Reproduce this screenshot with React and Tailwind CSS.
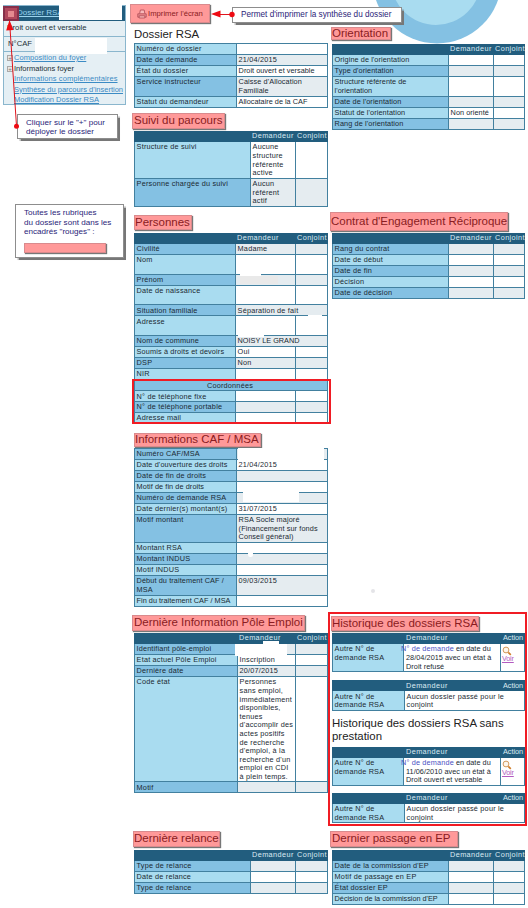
import React from "react";

const ALT = { label: "bg-[#84c1e3]", value: "bg-[#e5ecf0]" };
const BASE = { label: "bg-[#a9dcf0]", value: "bg-white" };
const LINE = "border-[#42809f]";

const COLS = {
  two: ["w-[102px]", "flex-1"],
  wide: ["w-[116px]", "w-[45px]", "flex-1"],
  person: ["w-[101px]", "w-[60px]", "flex-1"],
  job: ["w-[103px]", "w-[58px]", "flex-1"],
  history: ["w-[72px]", "w-[97px]", "flex-1"],
  pair: ["w-[72px]", "flex-1"],
};

// Letter spacing for the labels that are set tighter than the table default
const TRACKING = {
  "Fin du traitement CAF / MSA": "tracking-[0.02px]",
  "Début du traitement CAF /\nMSA": "tracking-[0.1px]",
  "Date d'ouverture des droits": "tracking-[0.13px]",
  "Soumis à droits et devoirs": "tracking-[0.14px]",
  "Non orienté": "tracking-[0.05px]",
  "Droit ouvert et versable": "tracking-[0.02px]",
  "Caisse d'Allocation\nFamiliale": "tracking-[0.1px]",
  "Allocataire de la CAF": "tracking-[0.01px]",
  "Motif de fin de droits": "tracking-[0.08px]",
  "Identifiant pôle-emploi": "tracking-[0.14px]",
  "Structure référente de\nl'orientation": "tracking-[0.04px]",
  "Origine de l'orientation": "tracking-[0.08px]",
  "Type d'orientation": "tracking-[0.1px]",
  "Date de l'orientation": "tracking-[0.1px]",
  "Statut de l'orientation": "tracking-[0.1px]",
  "Rang de l'orientation": "tracking-[0.1px]",
  "RSA Socle majoré\n(Financement sur fonds\nConseil général)": "tracking-[0.11px]",
  "Date de la commission d'EP": "tracking-[0.12px]",
  "Décision de la commission d'EP": "tracking-[-0.02px]",
  "NOISY LE GRAND": "tracking-[0px]",
};

// Values that run over into the next column, with no divider after them
const OPEN = ["Séparation de fait", "NOISY LE GRAND"];

function Head({ cols, labels }) {
  return (
    <div className="flex h-[11px] bg-[#225d7e] text-[#dcebf3]">
      {cols.map((w, i) => (
        <div
          key={i}
          className={`${w} shrink-0 whitespace-nowrap pl-[2px] pt-[1.4px] ${labels[i] === "Action" ? "tracking-[-0.05px]" : "tracking-[0.4px]"}`}
        >
          {labels[i]}
        </div>
      ))}
    </div>
  );
}

function Row({ cols, cells, alt }) {
  const tone = alt ? ALT : BASE;
  return (
    <div className={`flex border-b border-l ${LINE}`}>
      {cols.map((w, i) => (
        <div
          key={i}
          className={`${w} shrink-0 whitespace-pre pl-[1.6px] pt-[1.4px] ${OPEN.includes(cells[i]) ? "" : "border-r"} ${LINE} ${i === 0 ? tone.label : tone.value}`}
        >
          <span className={`relative z-10 ${TRACKING[cells[i]] || ""}`}>{cells[i] || " "}</span>
        </div>
      ))}
    </div>
  );
}

function Table({ kind, head, rows, firstAlt = false, className = "" }) {
  const cols = COLS[kind];
  return (
    <div className={`w-[194px] text-[7.3px] leading-[8.6px] tracking-[0.2px] text-[#1b2a33] ${className}`}>
      {head ? <Head cols={cols} labels={head} /> : <div className={`-mt-px border-t ${LINE}`} />}
      {rows.map((r, i) => {
        const alt = firstAlt ? i % 2 === 0 : i % 2 === 1;
        if (typeof r === "string") {
          return (
            <div key={i} className={`border-x border-b bg-[#84c1e3] pr-[2px] pt-[1.9px] text-center ${LINE}`}>
              {r}
            </div>
          );
        }
        return <Row key={i} cols={cols} cells={r} alt={alt} />;
      })}
    </div>
  );
}

const BOX = "border border-[#d98a8d] bg-[#ff9999] shadow-[1px_1px_1px_#777]";

function Title({ className, children }) {
  return (
    <h2 className={`flex items-center whitespace-nowrap text-[11.5px] leading-none tracking-[-0.02px] text-[#8a1c22] ${BOX} ${className}`}>
      {children}
    </h2>
  );
}

const CALLOUT = "absolute border border-[#8d8d8d] bg-white text-[#2b2478] shadow-[1.5px_1.5px_1px_#777]";

function Magnifier() {
  return (
    <svg viewBox="0 0 10 10" className="h-[10px] w-[10px]">
      <circle cx="4" cy="4" r="2.9" fill="#fdf6ec" stroke="#d39a5c" strokeWidth="1" />
      <path d="M6.3 6.3L8.8 8.8" stroke="#d07d28" strokeWidth="1.7" />
    </svg>
  );
}

function HistoryTable({ lines, className }) {
  return (
    <div className={`w-[193px] text-[7.3px] leading-[8.6px] tracking-[0.2px] text-[#1b2a33] ${className}`}>
      <Head cols={COLS.history} labels={["", "Demandeur", "Action"]} />
      <div className={`flex border-b border-l ${LINE}`}>
        <div className={`w-[71px] shrink-0 whitespace-pre border-r bg-[#a9dcf0] pl-[1.6px] pt-[1.4px] ${LINE}`}>
          {"Autre N° de\ndemande RSA"}
        </div>
        <div className={`w-[97px] shrink-0 whitespace-pre border-r bg-white pl-[2px] pt-[1.4px] tracking-[0.04px] ${LINE}`}>
          <div className="-ml-[5px] flex gap-[2px]">
            <span className="relative tracking-[0.16px] text-[#4a52c4]">N° de demande</span>
            <span>en date du</span>
          </div>
          <div>{lines}</div>
        </div>
        <div className={`flex-1 border-r bg-white pl-[1px] pt-[2px] ${LINE}`}>
          <Magnifier />
          <div className="-mt-px leading-[8px] tracking-[-0.2px] text-[#b35bc0] underline">Voir</div>
        </div>
      </div>
    </div>
  );
}

function EmptyHistory({ className }) {
  return (
    <div className={`w-[193px] text-[7.3px] leading-[8.6px] tracking-[0.2px] text-[#1b2a33] ${className}`}>
      <Head cols={COLS.history} labels={["", "Demandeur", "Action"]} />
      <Row cols={COLS.pair} cells={["Autre N° de\ndemande RSA", "Aucun dossier passé pour le\nconjoint"]} />
    </div>
  );
}

function Expand() {
  return (
    <span className="flex h-[6px] w-[6px] shrink-0 items-center justify-center border border-[#a9a9a9] bg-[#e9e6e3] text-[6px] leading-none text-[#777]">
      +
    </span>
  );
}

function Sidebar() {
  const link = "whitespace-nowrap pl-[10px] text-[#3b8bc4] underline";
  return (
    <div className="ml-[3px] mt-[5px] h-[100px] w-[123px] border border-[#8ab6cd] bg-[#e5eff4] text-[7.5px] leading-[10.5px] text-[#222f36]">
      <div className="flex h-[15px] items-center bg-[#225d7e] pl-[13px] text-[8px] text-[#9bd4ee]">
        <span className="underline">Dossier RSA</span>
      </div>
      <div className="flex h-[16px] items-center border-b border-[#8ab6cd] pl-[3px] text-[7.7px]">Droit ouvert et versable</div>
      <div className="flex h-[15px] items-center border-b border-[#8ab6cd] pl-[4px] text-[7.7px]">N°CAF</div>
      <div className="flex items-center gap-[1px] whitespace-nowrap pl-[3px] pt-[1px]">
        <Expand />
        <span className="tracking-[0.07px] text-[#3b8bc4] underline">Composition du foyer</span>
      </div>
      <div className="flex items-center gap-[1px] whitespace-nowrap pl-[3px]">
        <Expand />
        <span>Informations foyer</span>
      </div>
      <div className={`${link} tracking-[0.11px]`}>Informations complémentaires</div>
      <div className={link}>Synthèse du parcours d'insertion</div>
      <div className={link}>Modification Dossier RSA</div>
    </div>
  );
}

const DC = ["", "Demandeur", "Conjoint"];

export default function App() {
  return (
    <div className="relative h-[908px] w-[528px] overflow-hidden bg-white font-['Liberation_Sans',Arial,sans-serif]">
      <svg className="absolute left-0 top-0 h-[50px] w-[528px]" viewBox="0 0 528 50">
        <circle cx="437" cy="-21" r="64.5" fill="#84c1e3" />
        <circle cx="436" cy="-20" r="45" fill="#a9dcf0" />
      </svg>

      <div className="relative flex">
        <aside className="w-[134px] shrink-0">
          <Sidebar />
        </aside>

        <main className="w-[198px] shrink-0">
          <section className="h-[111px]">
            <div className="h-[25px] pt-[4px]">
              <div className={`-ml-[4px] flex h-[19px] w-[80px] items-center gap-[1px] pl-[6px] ${BOX}`}>
                <svg viewBox="0 0 10 10" className="h-[10px] w-[10px]" fill="none" stroke="#b5545c" strokeWidth="0.9">
                  <path d="M2.6 4.6L3.4 1h3.800l.6 3.600" fill="#f7b9ba" />
                  <path d="M.8 4.8h8.400v3.400H.8z" fill="#e98a8e" />
                  <path d="M2.2 6.8h5.600v2.200H2.2z" fill="#f7b9ba" />
                </svg>
                <span className="whitespace-nowrap text-[7.7px] leading-none text-[#8a1c22]">Imprimer l'écran</span>
              </div>
            </div>
            <h2 className="flex h-[19px] items-center text-[11.4px] leading-none text-[#222]">Dossier RSA</h2>
            <Table
              kind="two"
              rows={[
                ["Numéro de dossier"],
                ["Date de demande", "21/04/2015"],
                ["État du dossier", "Droit ouvert et versable"],
                ["Service instructeur", "Caisse d'Allocation\nFamiliale"],
                ["Statut du demandeur", "Allocataire de la CAF"],
              ]}
            />
          </section>

          <section className="h-[102px]">
            <div className="h-[20px] pt-[2px]">
              <Title className="-ml-[2px] h-[16px] w-[93px] pl-[1px]">Suivi du parcours</Title>
            </div>
            <Table
              kind="wide"
              head={DC}
              rows={[
                ["Structure de suivi", "Aucune\nstructure\nréférente\nactive"],
                ["Personne chargée du suivi", "Aucun\nréférent\nactif"],
              ]}
            />
          </section>

          <section className="h-[218px]">
            <div className="h-[20px] pt-[2px]">
              <Title className="h-[15px] w-[58px]">Personnes</Title>
            </div>
            <Table
              kind="person"
              head={DC}
              firstAlt
              rows={[
                ["Civilité", "Madame"],
                ["Nom\n "],
                ["Prénom"],
                ["Date de naissance\n "],
                ["Situation familiale", "Séparation de fait"],
                ["Adresse\n "],
                ["Nom de commune", "NOISY LE GRAND"],
                ["Soumis à droits et devoirs", "Oui"],
                ["DSP", "Non"],
                ["NIR"],
                "Coordonnées",
                ["N° de téléphone fixe"],
                ["N° de téléphone portable"],
                ["Adresse mail"],
              ]}
            />
          </section>

          <section className="h-[181px]">
            <div className="h-[18px] pt-[2px]">
              <Title className="h-[14px] w-[127px]">Informations CAF / MSA</Title>
            </div>
            <Table
              kind="two"
              firstAlt
              rows={[
                ["Numéro CAF/MSA"],
                ["Date d'ouverture des droits", "21/04/2015"],
                ["Date de fin de droits"],
                ["Motif de fin de droits"],
                ["Numéro de demande RSA"],
                ["Date dernier(s) montant(s)", "31/07/2015"],
                ["Motif montant", "RSA Socle majoré\n(Financement sur fonds\nConseil général)"],
                ["Montant RSA"],
                ["Montant INDUS"],
                ["Motif INDUS"],
                ["Début du traitement CAF /\nMSA", "09/03/2015"],
                ["Fin du traitement CAF / MSA"],
              ]}
            />
          </section>

          <section className="h-[218px]">
            <div className="h-[21px] pt-[3px]">
              <Title className="-ml-[2px] h-[16px] w-[173px] pl-[1px]">Dernière Information Pôle Emploi</Title>
            </div>
            <Table
              kind="job"
              head={DC}
              firstAlt
              rows={[
                ["Identifiant pôle-emploi"],
                ["Etat actuel Pôle Emploi", "Inscription"],
                ["Dernière date", "20/07/2015"],
                [
                  "Code état",
                  "Personnes\nsans emploi,\nimmédiatement\ndisponibles,\ntenues\nd'accomplir des\nactes positifs\nde recherche\nd'emploi, à la\nrecherche d'un\nemploi en CDI\nà plein temps.",
                ],
                ["Motif"],
              ]}
            />
          </section>

          <section>
            <div className="h-[20px] pt-px">
              <Title className="-ml-px h-[16px] w-[87px]">Dernière relance</Title>
            </div>
            <Table kind="wide" head={DC} firstAlt rows={[["Type de relance"], ["Date de relance"], ["Type de relance"]]} />
          </section>
        </main>

        <div className="w-[196px] shrink-0">
          <section className="h-[211px]">
            <div className="h-[44px] pt-[27px]">
              <Title className="-ml-px h-[13px] w-[60px]">Orientation</Title>
            </div>
            <Table
              kind="wide"
              className="max-w-[193px]"
              head={DC}
              rows={[
                ["Origine de l'orientation"],
                ["Type d'orientation"],
                ["Structure référente de\nl'orientation"],
                ["Date de l'orientation"],
                ["Statut de l'orientation", "Non orienté"],
                ["Rang de l'orientation"],
              ]}
            />
          </section>

          <section className="h-[401px]">
            <div className="h-[22px] pt-px">
              <Title className="-ml-[2px] h-[19px] w-[178px]">Contrat d'Engagement Réciproque</Title>
            </div>
            <Table
              kind="wide"
              className="max-w-[193px]"
              head={DC}
              firstAlt
              rows={[["Rang du contrat"], ["Date de début"], ["Date de fin"], ["Décision"], ["Date de décision"]]}
            />
          </section>

          <section className="-ml-[4px] h-[218px]">
            <div className="h-[214px] w-[199px] border-2 border-[#f01c24] pl-[2px] pt-[2px]">
              <Title className="-ml-px h-[15px] w-[148px]">Historique des dossiers RSA</Title>
              <HistoryTable className="mt-[2px]" lines={"28/04/2015 avec un état à\nDroit refusé"} />
              <EmptyHistory className="mt-[8px]" />
              <h2 className="mt-[6px] whitespace-pre text-[11.4px] leading-[13.4px] text-[#222]">
                {"Historique des dossiers RSA sans\nprestation"}
              </h2>
              <HistoryTable className="mt-[3px]" lines={"11/06/2010 avec un état à\nDroit ouvert et versable"} />
              <EmptyHistory className="mt-[7px]" />
            </div>
          </section>

          <section>
            <div className="h-[20px] pt-px">
              <Title className="-ml-[2px] h-[16px] w-[128px] pl-px">Dernier passage en EP</Title>
            </div>
            <Table
              kind="wide"
              className="max-w-[193px]"
              head={DC}
              firstAlt
              rows={[
                ["Date de la commission d'EP"],
                ["Motif de passage en EP"],
                ["État dossier EP"],
                ["Décision de la commission d'EP"],
              ]}
            />
          </section>
        </div>
      </div>

      {/* Masked personal data */}
      <div className="absolute left-[59px] top-[4px] h-[16px] w-[63px] bg-white" />
      <div className="absolute left-[35px] top-[38px] h-[16px] w-[72px] bg-white" />
      <div className="absolute left-[240px] top-[274px] h-[4px] w-[21px] bg-white" />
      <div className="absolute left-[240px] top-[276px] h-[8px] w-[38px] bg-[#e9e9e9]" />
      <div className="absolute left-[308px] top-[315px] h-[2px] w-[14px] bg-white" />
      <div className="absolute left-[238px] top-[334px] h-[3px] w-[26px] bg-white" />
      <div className="absolute left-[238px] top-[448px] h-[12px] w-[86px] bg-white" />
      <div className="absolute left-[243px] top-[491px] h-[11px] w-[56px] bg-white" />
      <div className="absolute left-[248px] top-[551px] h-[6px] w-[5px] rounded-full bg-white" />
      <div className="absolute left-[235px] top-[644px] h-[12px] w-[52px] bg-white" />
      <div className="absolute left-[263px] top-[641px] h-[4px] w-[16px] bg-white" />
      <div className="absolute left-[371px] top-[589px] h-[4px] w-[4px] rounded-full bg-[#e4e4e8]" />

      {/* Contact details frame */}
      <div className="absolute left-[132px] top-[379px] h-[45px] w-[199px] border-2 border-[#f01c24]" />

      {/* Callouts */}
      <div className="absolute left-[3px] top-[6px] flex h-[15px] w-[16px] items-center justify-center border-2 border-[#86304a] bg-[#b0475c]">
        <span className="h-[6px] w-[6px] bg-[#e58a90]" />
      </div>
      <div className={`${CALLOUT} left-[17px] top-[114px] h-[25px] w-[101px] whitespace-nowrap pl-[8px] pt-[3px] text-[8.1px] leading-[9.4px]`}>
        Cliquer sur le "+" pour
        <br />
        déployer le dossier
      </div>
      <div className={`${CALLOUT} left-[15px] top-[204px] h-[54px] w-[109px] whitespace-nowrap pl-[8px] pt-[3px] text-[8.1px] leading-[9.5px]`}>
        Toutes les rubriques
        <br />
        du dossier sont dans les
        <br />
        encadrés "rouges" :
        <div className={`mt-[6px] h-[10px] w-[82px] ${BOX}`} />
      </div>
      <div className={`${CALLOUT} left-[232px] top-[7px] flex h-[16px] w-[170px] items-center whitespace-nowrap pl-[8px] text-[8.2px] leading-none`}>
        Permet d'imprimer la synthèse du dossier
      </div>
      <svg className="absolute left-0 top-0 h-[140px] w-[240px]" viewBox="0 0 240 140">
        <path d="M232 14.5H217M16.5 126L10 28" stroke="#e0141c" strokeWidth="1" />
        <path d="M211 14L220.500 10.500V17.500ZM9.500 20L6.200 30.500L13.400 30Z" fill="#ee0a12" />
        <circle cx="232" cy="14.500" r="2.700" fill="#ee0a12" />
        <circle cx="16.500" cy="126.300" r="2.500" fill="#ee0a12" />
      </svg>
    </div>
  );
}
